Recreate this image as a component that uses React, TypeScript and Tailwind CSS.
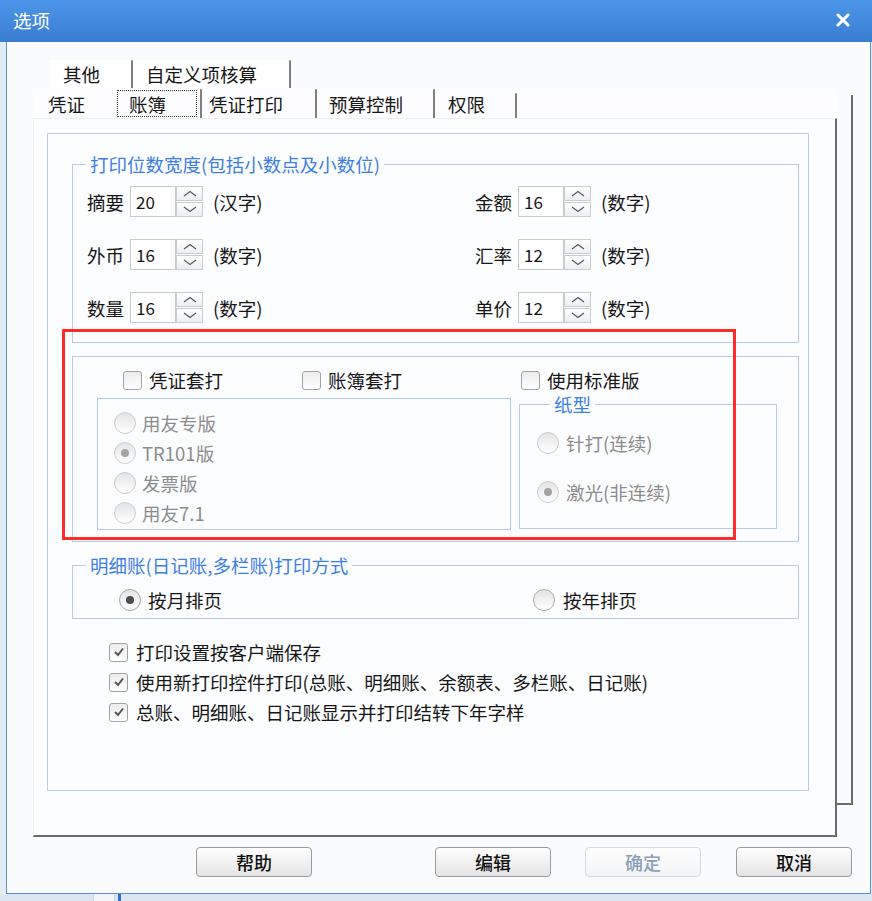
import React from 'react';

type FieldProps = { label: string; value: string; unit: string };

const Chevron = ({ up }: { up?: boolean }) => (
  <svg width="14" height="7" viewBox="0 0 14 7">
    <polyline
      points={up ? '1,6 7,1.5 13,6' : '1,1 7,5.5 13,1'}
      fill="none"
      stroke="#5a5a5a"
      strokeWidth="1.2"
    />
  </svg>
);

const Spin = () => (
  <div className="flex h-[31px] w-[27px] flex-col gap-px">
    <div className="flex flex-1 items-center justify-center border border-[#c8cdd4] bg-gradient-to-b from-white to-[#eceef1]">
      <Chevron up />
    </div>
    <div className="flex flex-1 items-center justify-center border border-[#c8cdd4] bg-gradient-to-b from-white to-[#eceef1]">
      <Chevron />
    </div>
  </div>
);

const NumField = ({ label, value, unit }: FieldProps) => (
  <div className="flex h-[31px] items-center">
    <span className="w-[37px]">{label}</span>
    <div className="ml-[6px] flex h-full w-[46px] items-center border border-[#c5cad1] bg-white pl-[5px] text-[17px]">
      {value}
    </div>
    <Spin />
    <span className="ml-[10px]">{unit}</span>
  </div>
);

const Check = ({ checked }: { checked?: boolean }) => (
  <span className="flex h-[19px] w-[19px] shrink-0 items-center justify-center rounded-[3px] border border-[#a2a2a2] bg-gradient-to-b from-[#ececec] to-white">
    {checked && (
      <svg width="12" height="12" viewBox="0 0 12 12">
        <polyline points="2,6 5,9 10,2.5" fill="none" stroke="#555" strokeWidth="2" />
      </svg>
    )}
  </span>
);

const Radio = ({ on, disabled }: { on?: boolean; disabled?: boolean }) => (
  <span
    className={`flex h-[22px] w-[22px] shrink-0 items-center justify-center rounded-full border bg-gradient-to-b from-[#e4e4e4] to-white ${
      disabled ? 'border-[#cdcdcd]' : 'border-[#a9a9a9]'
    }`}
  >
    {on && <span className={`h-[8px] w-[8px] rounded-full ${disabled ? 'bg-[#a3a3a3]' : 'bg-[#4d4d4d]'}`} />}
  </span>
);

const Sep = ({ short }: { short?: boolean }) => (
  <span className={`w-[2px] rounded-t-[1px] bg-[#7e7e7e] ${short ? 'mt-[4px]' : ''}`} />
);

const Button = ({ label, disabled }: { label: string; disabled?: boolean }) => (
  <button
    className={`flex h-[30px] w-[116px] items-center justify-center rounded-[4px] border bg-gradient-to-b text-[18px] font-medium ${
      disabled
        ? 'border-[#d6d9dd] from-white to-[#f3f4f6] text-[#8aa0b8]'
        : 'border-[#9b9b9b] from-white to-[#e4e4e4] text-[#111]'
    }`}
  >
    {label}
  </button>
);

const legendCls = 'ml-[13px] px-[4px] text-[18.5px] leading-[24px] text-[#3c7fe3]';

export default function App() {
  return (
    <div className="relative h-[901px] w-[872px] overflow-hidden bg-[#dbe6f2] font-['Noto_Sans_CJK_SC',sans-serif] text-[18.5px] leading-[24px] text-[#161616]">
      {/* title bar */}
      <div className="flex h-[42px] items-center justify-between bg-gradient-to-b from-[#4c96ea] to-[#3a7dd1] pb-[3px] pl-[13px] pr-[22px] text-white">
        <span>选项</span>
        <svg width="14" height="14" viewBox="0 0 14 14">
          <path d="M2 2L12 12M12 2L2 12" stroke="white" strokeWidth="3" strokeLinecap="round" />
        </svg>
      </div>

      <div className="flex">
        <div className="w-[6px] bg-[#e4edf7]" />
        <div className="w-[865px] border-x border-b border-[#5a90d8] bg-[#f9fbfd] pb-[16px] pt-[18px]">
          {/* back tab row */}
          <div className="ml-[42px] flex h-[28px] items-stretch">
            <div className="flex w-[82px] items-center bg-white pl-[14px]">其他</div>
            <Sep />
            <div className="flex w-[156px] items-center bg-white pl-[13px]">自定义项核算</div>
            <Sep />
          </div>

          <div className="ml-[26px] mt-px flex">
            <div className="flex flex-col">
              {/* front tab row */}
              <div className="flex h-[29px] items-stretch bg-[#fdfdff]">
                <div className="flex w-[84px] items-center pl-[15px]">凭证</div>
                <div className="my-px flex w-[80px] items-center border border-dotted border-[#3a3a3a] pl-[11px]">账簿</div>
                <div className="w-[3px]" />
                <Sep />
                <div className="flex w-[113px] items-center pl-[7px]">凭证打印</div>
                <Sep />
                <div className="flex w-[116px] items-center pl-[12px]">预算控制</div>
                <Sep />
                <div className="flex w-[80px] items-center pl-[13px]">权限</div>
                <Sep short />
              </div>

              {/* tab page */}
              <div className="h-[719px] w-[804px] border-b-2 border-l border-r-2 border-t border-b-[#6c6c6c] border-l-[#edf0f4] border-r-[#6c6c6c] border-t-[#edf0f4] bg-[#fcfdfe] pl-[13px] pt-[14px]">
                <div className="h-[658px] w-[762px] border border-[#bccfe6]">
                  <fieldset className="ml-[24px] mt-[18px] w-[727px] border border-[#b7cbe3] pb-[19px]">
                    <legend className={legendCls}>打印位数宽度(包括小数点及小数位)</legend>
                    <div className="grid grid-cols-[388px_1fr] gap-y-[22px] pl-[14px] pt-[10px]">
                      <NumField label="摘要" value="20" unit="(汉字)" />
                      <NumField label="金额" value="16" unit="(数字)" />
                      <NumField label="外币" value="16" unit="(数字)" />
                      <NumField label="汇率" value="12" unit="(数字)" />
                      <NumField label="数量" value="16" unit="(数字)" />
                      <NumField label="单价" value="12" unit="(数字)" />
                    </div>
                  </fieldset>

                  <fieldset className="ml-[24px] mt-[13px] w-[727px] border border-[#b7cbe3] pb-[11px]">
                    <div className="ml-[50px] mt-[11px] flex h-[24px] items-center">
                      <div className="flex w-[179px] items-center gap-[7px]">
                        <Check />
                        <span>凭证套打</span>
                      </div>
                      <div className="flex w-[219px] items-center gap-[7px]">
                        <Check />
                        <span>账簿套打</span>
                      </div>
                      <div className="flex items-center gap-[7px]">
                        <Check />
                        <span>使用标准版</span>
                      </div>
                    </div>
                    <div className="ml-[24px] flex items-start gap-[8px]">
                      <div className="mt-[6px] h-[132px] w-[414px] border border-[#b7cbe3] pl-[16px] pt-[9px] text-[#8c8c8c]">
                        {['用友专版', 'TR101版', '发票版', '用友7.1'].map((t, i) => (
                          <div key={t} className="flex h-[30px] items-center gap-[6px]">
                            <Radio on={i === 1} disabled />
                            <span>{t}</span>
                          </div>
                        ))}
                      </div>
                      <fieldset className="h-[137px] w-[258px] border border-[#b7cbe3] pl-[17px] text-[#8c8c8c]">
                        <legend className={legendCls}>纸型</legend>
                        <div className="mt-[12px] flex h-[30px] items-center gap-[7px]">
                          <Radio disabled />
                          <span>针打(连续)</span>
                        </div>
                        <div className="mt-[19px] flex h-[30px] items-center gap-[7px]">
                          <Radio on disabled />
                          <span>激光(非连续)</span>
                        </div>
                      </fieldset>
                    </div>
                  </fieldset>

                  <fieldset className="ml-[24px] mt-[11px] w-[727px] border border-[#b7cbe3] pb-[3px]">
                    <legend className={legendCls}>明细账(日记账,多栏账)打印方式</legend>
                    <div className="ml-[46px] mt-[8px] flex h-[30px] items-center">
                      <div className="flex w-[414px] items-center gap-[7px]">
                        <Radio on />
                        <span>按月排页</span>
                      </div>
                      <div className="flex items-center gap-[8px]">
                        <Radio />
                        <span>按年排页</span>
                      </div>
                    </div>
                  </fieldset>

                  <div className="ml-[61px] mt-[18px]">
                    {[
                      '打印设置按客户端保存',
                      '使用新打印控件打印(总账、明细账、余额表、多栏账、日记账)',
                      '总账、明细账、日记账显示并打印结转下年字样',
                    ].map((t) => (
                      <div key={t} className="flex h-[30px] items-center gap-[8px]">
                        <Check checked />
                        <span>{t}</span>
                      </div>
                    ))}
                  </div>
                </div>
              </div>
            </div>

            {/* page stacked behind */}
            <div className="w-[16px] pt-[6px]">
              <div className="h-[710px] border-b-2 border-r-2 border-[#6c6c6c]" />
            </div>
          </div>

          <div className="ml-[189px] mt-[10px] flex">
            <Button label="帮助" />
            <div className="ml-[123px]">
              <Button label="编辑" />
            </div>
            <div className="ml-[34px]">
              <Button label="确定" disabled />
            </div>
            <div className="ml-[35px]">
              <Button label="取消" />
            </div>
          </div>
        </div>
        <div className="w-px bg-[#e4edf7]" />
      </div>

      <div className="flex h-[7px]">
        <div className="ml-[93px] w-[22px] border-x border-[#c9d3de] bg-[#f3f6f9]" />
        <div className="ml-[3px] w-[3px] bg-[#2b6fca]" />
      </div>

      {/* red annotation */}
      <div className="absolute left-[62px] top-[329px] h-[211px] w-[674px] border-[3px] border-[#ff2b2b]" />
    </div>
  );
}
